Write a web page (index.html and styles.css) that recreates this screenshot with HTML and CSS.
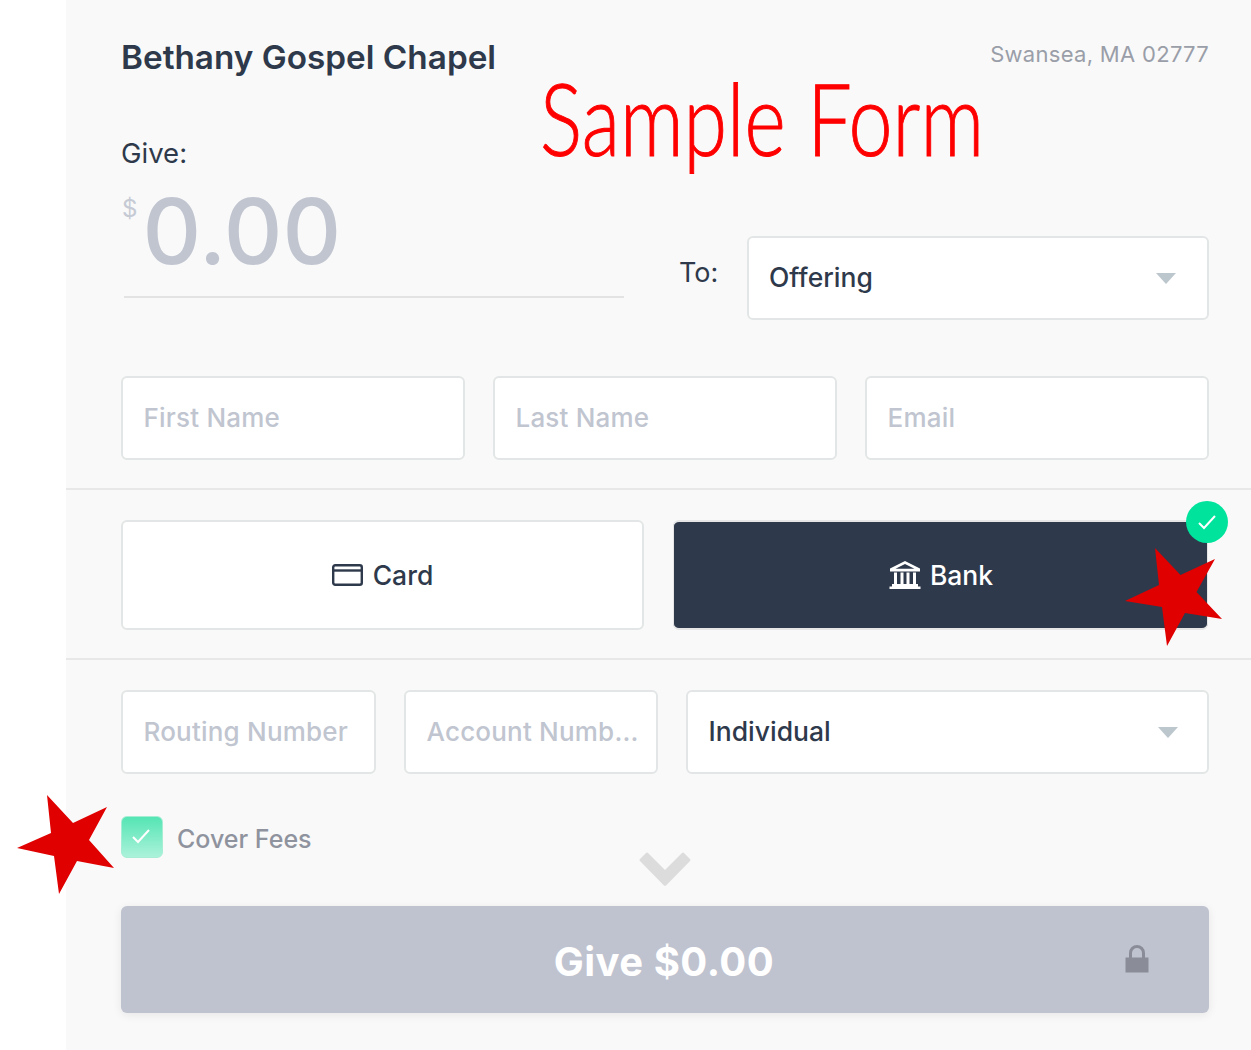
FILE: index.html
```html
<!DOCTYPE html>
<html lang="en">
<head>
    <meta charset="UTF-8">
    <meta name="viewport" content="width=device-width, initial-scale=1.0">
    <title>Bethany Gospel Chapel</title>
    <link rel="stylesheet" href="styles.css">
</head>
<body>

<div class="sidebar"></div>

<main class="panel">
    <section class="section top">
        <header class="header">
            <h1 class="title">Bethany Gospel Chapel</h1>
            <span class="location">Swansea, MA 02777</span>
        </header>

        <div class="give-row">
            <div class="amount-col">
                <div class="give-label">Give:</div>
                <div class="amount">
                    <span class="currency">$</span>
                    <span class="value">0.00</span>
                </div>
            </div>
            <div class="to-col">
                <span class="to-label">To:</span>
                <div class="select to-select">
                    <span>Offering</span>
                    <span class="arrow"></span>
                </div>
            </div>
        </div>

        <div class="name-row">
            <input class="field" type="text" placeholder="First Name">
            <input class="field" type="text" placeholder="Last Name">
            <input class="field" type="text" placeholder="Email">
        </div>
    </section>

    <section class="section methods">
        <button class="method">
            <svg class="card-icon" width="31" height="22" viewBox="0 0 31 22" fill="none" stroke="currentColor" stroke-width="2.4">
                <rect x="1.2" y="1.2" width="28.6" height="19.6" rx="2"/>
                <path d="M1 6.5h29"/>
            </svg>
            Card
        </button>
        <button class="method selected">
            <svg class="bank-icon" width="32" height="28" viewBox="0 0 32 28" fill="currentColor">
                <path d="M16 0 31 7.5V10.5H1V7.5ZM16 3 6.5 7.8H25.5Z" fill-rule="evenodd"/>
                <path d="M5 11.5H8V23H5ZM11.5 11.5H14.5V23H11.5ZM17.5 11.5H20.5V23H17.5ZM24 11.5H27V23H24ZM3 23H29V25.5H3ZM0.5 25.5H31.5V28H0.5Z"/>
            </svg>
            Bank
            <span class="badge">
                <svg width="20" height="16" viewBox="0 0 20 16" fill="none" stroke="#fff" stroke-width="2">
                    <path d="M2 9l5 5L18 2"/>
                </svg>
            </span>
        </button>
    </section>

    <section class="section payment">
        <div class="bank-row">
            <input class="field" type="text" placeholder="Routing Number">
            <input class="field" type="text" placeholder="Account Numb...">
            <div class="select type-select">
                <span>Individual</span>
                <span class="arrow"></span>
            </div>
        </div>

        <label class="fees">
            <span class="checkbox">
                <svg width="20" height="16" viewBox="0 0 20 16" fill="none" stroke="#fff" stroke-width="2">
                    <path d="M2 9l5 5L18 2"/>
                </svg>
            </span>
            <span class="fees-text">Cover Fees</span>
        </label>

        <button class="submit">
            Give $0.00
            <svg class="lock" width="24" height="28" viewBox="0 0 24 28">
                <path d="M5.5 13V8a6.5 6.5 0 0 1 13 0v5" fill="none" stroke="#8a8d97" stroke-width="3"/>
                <rect x="0.5" y="12.5" width="23" height="15" fill="#8a8d97"/>
            </svg>
        </button>

        <svg class="more" width="52" height="34" viewBox="0 0 52 34" fill="#dcdcdc">
            <path d="M9 1 26 18 43 1a1.5 1.5 0 0 1 2 0l6 6a1.5 1.5 0 0 1 0 2L27.5 33a2 2 0 0 1-3 0L1 9a1.5 1.5 0 0 1 0-2l6-6a1.5 1.5 0 0 1 2 0Z"/>
        </svg>
    </section>
</main>

<div class="sample">Sample Form</div>

<svg class="stars" width="1251" height="1050" viewBox="0 0 1251 1050" fill="#e00000">
    <polygon points="1155,548 1180.5,575 1215,559 1196.5,592 1222,619 1185,613 1167,646 1162,607 1125,601 1159,585"/>
    <polygon points="47,795 73,823 107,807 89,840 114,868 77,861 59,894 54,856 17,848 51,833"/>
</svg>

</body>
</html>
```

FILE: styles.css
```css
* {
    box-sizing: border-box;
}

body {
    margin: 0;
    height: 1050px;
    display: flex;
    overflow: hidden;
    background-color: #fff;
    color: #2e394b;
    font-family: Inter, "Liberation Sans", sans-serif;
}

.sidebar {
    width: 66px;
    flex-shrink: 0;
}

.panel {
    flex: 1;
    background-color: #f9f9f9;
}

.section {
    padding: 0 42px 0 55px;
}

.top {
    padding-top: 35px;
    padding-bottom: 28px;
    border-bottom: 2px solid #e8e8e8;
}

.header {
    display: flex;
    justify-content: space-between;
    align-items: flex-start;
    height: 45px;
}

.title {
    margin: 0;
    font-size: 33.3px;
    line-height: 44px;
    font-weight: 600;
}

.location {
    margin-top: 1px;
    font-size: 22px;
    line-height: 36px;
    letter-spacing: 0.3px;
    color: #9a9ea8;
}

.give-row {
    display: flex;
    margin-top: 56px;
    height: 184px;
}

.amount-col {
    width: 503px;
    margin-right: 56px;
}

.give-label {
    margin-top: -1px;
    font-size: 27.5px;
    line-height: 36px;
}

.amount {
    display: flex;
    align-items: flex-start;
    height: 114px;
    margin-top: 13px;
    margin-left: 3px;
    border-bottom: 2px solid #e3e3e3;
    color: #c0c5d0;
}

.currency {
    margin-left: -2px;
    margin-top: 11px;
    font-size: 24px;
    line-height: 28px;
    color: #c5cad4;
}

.value {
    margin-top: 1px;
    margin-left: 5px;
    font-size: 91px;
    line-height: 92px;
    font-weight: 550;
}

.to-col {
    flex: 1;
    display: flex;
    align-items: flex-end;
}

.to-label {
    width: 68px;
    margin-left: -1px;
    font-size: 27px;
    line-height: 34px;
    margin-bottom: 30px;
}

.select {
    display: flex;
    justify-content: space-between;
    align-items: center;
    height: 84px;
    border: 2px solid #e3e6e6;
    border-radius: 6px;
    background-color: #fff;
    font-size: 26.5px;
    font-weight: 500;
}

.select span:first-child {
    margin-bottom: 2px;
}

.to-select {
    flex: 1;
    padding: 0 31px 0 20px;
}

.type-select {
    padding: 0 29px 0 20.5px;
}

.arrow {
    width: 0;
    height: 0;
    border-left: 10.5px solid transparent;
    border-right: 10.5px solid transparent;
    border-top: 11px solid #bcc6cd;
}

.name-row {
    display: grid;
    grid-template-columns: 344px 344px 344px;
    gap: 28px;
    margin-top: 56px;
}

.field {
    width: 100%;
    height: 84px;
    padding: 0 10px 1px 20.5px;
    border: 2px solid #e3e6e6;
    border-radius: 6px;
    background-color: #fff;
    font-family: Inter, "Liberation Sans", sans-serif;
    font-size: 26px;
    font-weight: 500;
    letter-spacing: 0.2px;
    outline: none;
}

.field::placeholder {
    color: #c0c5d0;
    opacity: 1;
}

.methods {
    display: grid;
    grid-template-columns: 523px 535px;
    gap: 29px;
    padding-top: 30px;
    padding-bottom: 28px;
    border-bottom: 2px solid #e8e8e8;
}

.method {
    position: relative;
    display: flex;
    justify-content: center;
    align-items: center;
    gap: 10px;
    height: 110px;
    border: 2px solid #e3e6e6;
    border-radius: 6px;
    background-color: #fff;
    color: #2e394b;
    font-family: Inter, "Liberation Sans", sans-serif;
    font-size: 26.5px;
    font-weight: 500;
}

.method.selected {
    background-color: #2e394b;
    border-color: #e6e6e6;
    border-width: 2px 1px;
    color: #fff;
}

.bank-icon {
    margin-left: 1px;
    margin-right: -1px;
}

.badge {
    position: absolute;
    top: -21px;
    right: -21px;
    display: flex;
    justify-content: center;
    align-items: center;
    width: 42px;
    height: 42px;
    border-radius: 50%;
    background-color: #00e39c;
}

.payment {
    position: relative;
    padding-top: 30px;
}

.bank-row {
    display: grid;
    grid-template-columns: 255px 254px 523px;
    gap: 28px;
}

.fees {
    display: flex;
    align-items: center;
    gap: 14px;
    margin-top: 42px;
    font-size: 25px;
    font-weight: 500;
    color: #8f939e;
}

.fees-text {
    margin-top: 3px;
}

.checkbox {
    display: flex;
    justify-content: center;
    align-items: center;
    width: 42px;
    height: 42px;
    padding: 0 2px 3px 0;
    border: 1px solid #a5eed3;
    border-radius: 6px;
    background: linear-gradient(#55e5b4, #abf2da);
}

.submit {
    position: relative;
    display: block;
    width: 1088px;
    height: 107px;
    margin-top: 48px;
    padding: 3px 2px 0 0;
    border: none;
    border-radius: 6px;
    background-color: #bfc3cf;
    box-shadow: 0 2px 10px rgba(0, 0, 0, 0.08);
    color: #fff;
    font-family: Inter, "Liberation Sans", sans-serif;
    font-size: 40px;
    font-weight: 700;
    letter-spacing: 0.5px;
}

.lock {
    position: absolute;
    top: 39px;
    right: 60px;
}

.more {
    position: absolute;
    top: 192px;
    left: 573px;
}

.sample {
    position: absolute;
    left: 540px;
    top: 55px;
    font-family: Lato, sans-serif;
    font-size: 100px;
    font-weight: 300;
    line-height: 124px;
    color: #ff0000;
    -webkit-text-stroke: 1px #ff0000;
    white-space: nowrap;
    transform: scaleX(0.79);
    transform-origin: left center;
}

.stars {
    position: absolute;
    top: 0;
    left: 0;
    pointer-events: none;
}
```
